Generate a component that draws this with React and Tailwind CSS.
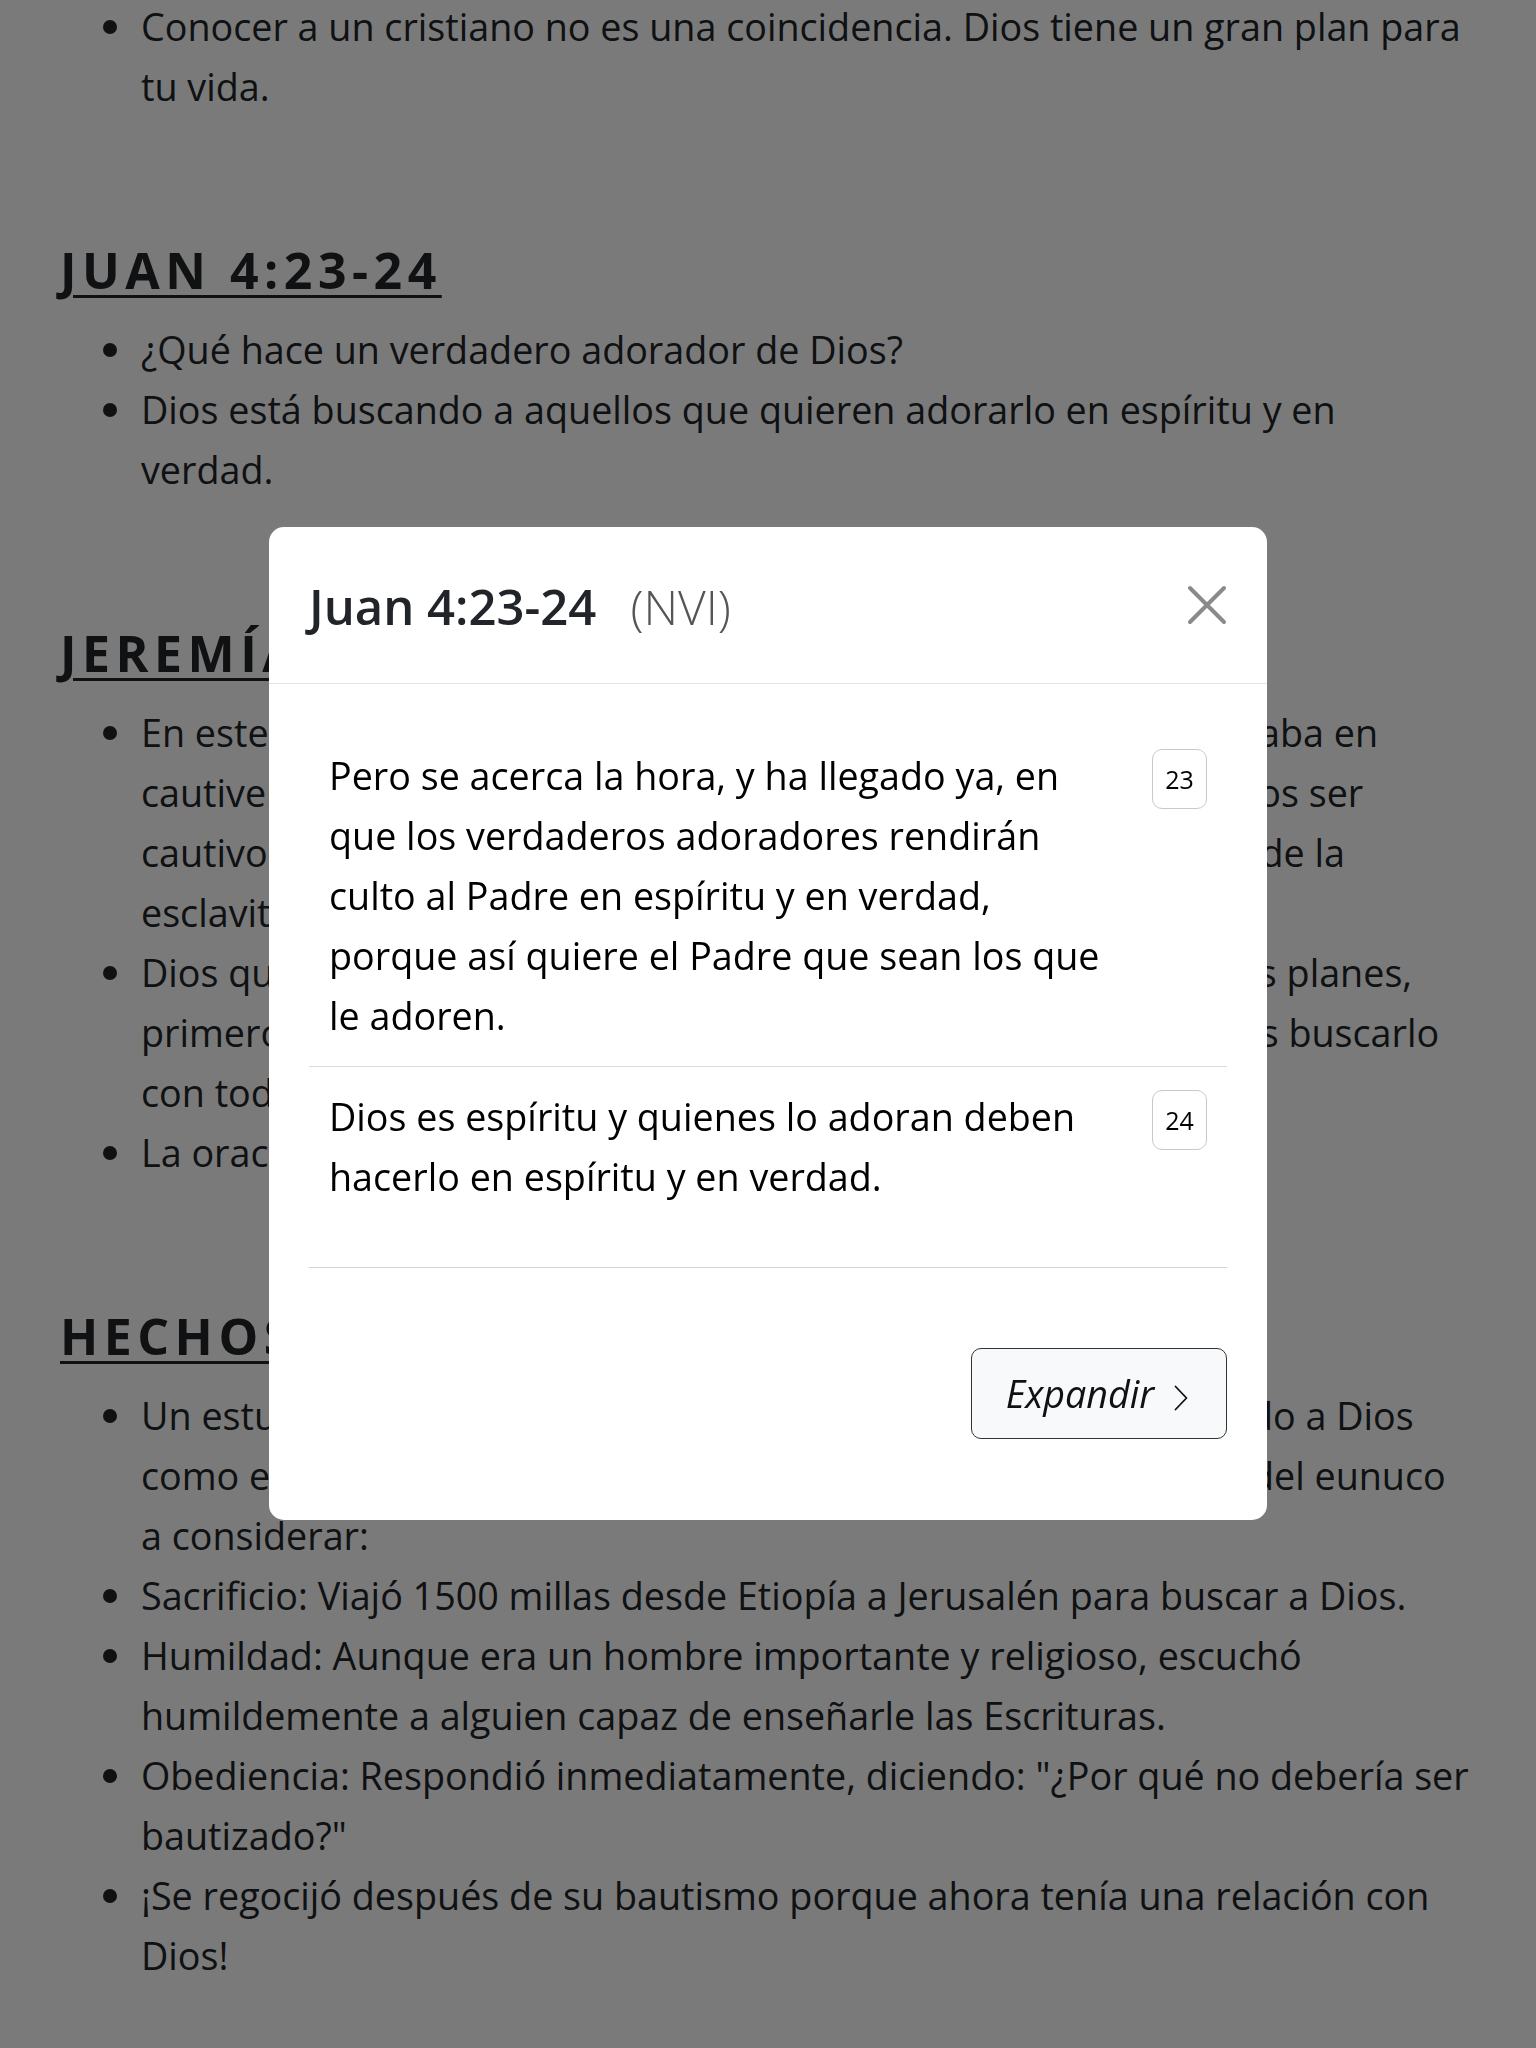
import React from "react";

const sections = [
  {
    title: null,
    items: [
      "Conocer a un cristiano no es una coincidencia. Dios tiene un gran plan para tu vida.",
    ],
  },
  {
    title: "JUAN 4:23-24",
    items: [
      "¿Qué hace un verdadero adorador de Dios?",
      "Dios está buscando a aquellos que quieren adorarlo en espíritu y en verdad.",
    ],
  },
  {
    title: "JEREMÍAS 29:11-13",
    items: [
      <>
        En este pasaje, el pueblo de Israel, por su pecado, ya se encontraba en
        <br />
        cautiverio en Babilonia. Dios no iba a permitirles nunca a sus hijos ser
        <br />
        cautivos por siempre; Él tenía un plan perfecto para rescatarlos de la
        <br />
        esclavitud.
      </>,
      <>
        Dios quiere darnos un futuro, y una esperanza. Para conocer sus planes,
        <br />
        primero debemos invocarlo, y venir a orarle, y después debemos buscarlo
        <br />
        con todo nuestro corazón.
      </>,
      "La oración nos ayuda a conocer la voluntad de Dios.",
    ],
  },
  {
    title: "HECHOS 8:26-39",
    items: [
      <>
        Un estudio de este relato muestra a un hombre sincero buscando a Dios
        <br />
        como el centro de toda su vida. Hay tres actitudes importantes del eunuco
        <br />
        a considerar:
      </>,
      "Sacrificio: Viajó 1500 millas desde Etiopía a Jerusalén para buscar a Dios.",
      "Humildad: Aunque era un hombre importante y religioso, escuchó humildemente a alguien capaz de enseñarle las Escrituras.",
      'Obediencia: Respondió inmediatamente, diciendo: "¿Por qué no debería ser bautizado?"',
      "¡Se regocijó después de su bautismo porque ahora tenía una relación con Dios!",
    ],
  },
];

const verses = [
  {
    num: 23,
    text: "Pero se acerca la hora, y ha llegado ya, en que los verdaderos adoradores rendirán culto al Padre en espíritu y en verdad, porque así quiere el Padre que sean los que le adoren.",
  },
  {
    num: 24,
    text: "Dios es espíritu y quienes lo adoran deben hacerlo en espíritu y en verdad.",
  },
];

const CloseIcon = () => (
  <svg width="40" height="40" viewBox="0 0 40 40" fill="none" stroke="#8a8a8a" strokeWidth="4" strokeLinecap="round">
    <path d="M3 3L37 37M37 3L3 37" />
  </svg>
);

const Chevron = () => (
  <svg width="14" height="26" viewBox="0 0 14 26" fill="none" stroke="#111" strokeWidth="1.8" strokeLinecap="round" strokeLinejoin="round">
    <path d="M1.5 1.5L12.5 13L1.5 24.5" />
  </svg>
);

const VerseModal = () => (
  <div className="fixed inset-0 bg-black/[0.52] flex justify-center items-start pt-[527px]">
    <div className="w-[998px] bg-white rounded-[15px] overflow-hidden">
      {/* encabezado */}
      <div className="h-[157px] px-10 flex items-center justify-between border-b border-[#e3e3e3]">
        <h3 className="flex items-baseline leading-[60px] mt-[3px]">
          <span className="text-[49px] font-semibold text-[#212529]">Juan 4:23-24</span>
          <span className="ml-[34px] text-[48px] font-light text-[#555]">(NVI)</span>
        </h3>
        <button type="button" aria-label="Cerrar" className="flex">
          <CloseIcon />
        </button>
      </div>

      {/* versículos */}
      <div className="px-10 pt-[42px] pb-10">
        {verses.map((v, i) => (
          <div
            key={v.num}
            className={`flex items-start justify-between px-5 py-5 ${i === 0 ? "border-b border-[#dcdcdc]" : ""}`}
          >
            <p className="w-[786px] text-black">{v.text}</p>
            <span className="mt-[3px] w-[55px] h-[60px] flex items-center justify-center rounded-[10px] border border-[#c9c9c9] text-[25px] leading-none font-medium text-black">
              {v.num}
            </span>
          </div>
        ))}
      </div>

      {/* pie */}
      <div className="mx-10 border-t border-[#d6d6d6] pt-20 pb-[81px] flex justify-end">
        <button
          type="button"
          className="w-[256px] h-[91px] flex items-center justify-center gap-5 pr-1 rounded-[10px] border-[1.5px] border-[#333] bg-[#f8f9fa] text-[#111]"
        >
          <span className="italic">Expandir</span>
          <span className="mt-2 flex">
            <Chevron />
          </span>
        </button>
      </div>
    </div>
  </div>
);

export default function App() {
  return (
    <div className="relative h-[2048px] overflow-hidden bg-white font-['Open_Sans',sans-serif] text-[37.7px] leading-[60px] text-[#212529]">
      <div className="px-[60px] mt-[-3px]">
        {sections.map((s, i) => (
          <section key={i}>
            {s.title && (
              <h2 className="mt-[123px] mb-5 text-[50px] leading-[60px] font-bold tracking-[0.11em] underline decoration-[3px] underline-offset-[6px]">
                {s.title}
              </h2>
            )}
            <ul className="pl-[43px]">
              {s.items.map((item, j) => (
                <li key={j} className="flex items-start gap-6">
                  <span className="mt-[23px] w-[14px] h-[14px] shrink-0 rounded-full bg-[#212529]" />
                  <span className="flex-1">{item}</span>
                </li>
              ))}
            </ul>
          </section>
        ))}
      </div>
      <VerseModal />
    </div>
  );
}
